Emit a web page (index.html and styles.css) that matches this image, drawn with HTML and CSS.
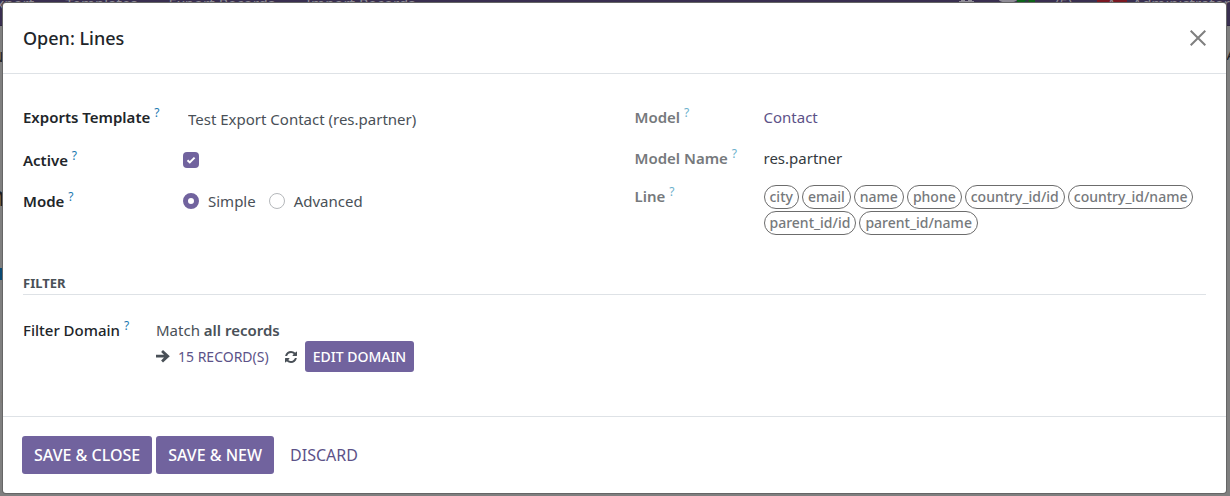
FILE: index.html
```html
<!DOCTYPE html>
<html lang="en">
<head>
<meta charset="utf-8">
<title>Open: Lines</title>
<link rel="stylesheet" href="styles.css">
</head>
<body>
<div class="backdrop" aria-hidden="true">
  <div class="topbar">
    <span class="menu menu-export">Export</span>
    <span class="menu">Templates</span>
    <span class="menu">Export Records</span>
    <span class="menu">Import Records</span>
    <span class="systray">
      <svg class="tray-icon" viewBox="0 0 16 16"><path d="M2 0h4v2H2zM9 0h4v2H9zM0 1h15v1H0z"/></svg>
      <svg class="tray-icon chat" viewBox="0 0 20 16"><ellipse cx="9" cy="-2" rx="10" ry="5"/></svg>
      <span class="count">4</span>
      <span class="count-text">(5)</span>
      <span class="avatar">A</span>
      <span class="user">Administrator</span>
    </span>
  </div>
  <span class="peek peek-n">N</span>
  <span class="peek peek-a">A</span>
  <span class="peek peek-m">n</span>
  <span class="peek peek-bar"></span>
  <span class="peek peek-i">i</span>
</div>
<main class="modal" role="dialog" aria-labelledby="title">
  <header class="modal-header">
    <h1 class="modal-title" id="title">Open: Lines</h1>
    <button class="close" type="button" aria-label="Close">
      <svg viewBox="0 0 16 16" width="16" height="16"><path d="M.7.7l14.6 14.6M15.3.7L.7 15.3" fill="none" stroke="#7f7f7f" stroke-width="2"/></svg>
    </button>
  </header>
  <form class="modal-body">
    <div class="groups">
      <div class="group">
        <div class="row row-template">
          <label class="label" for="template">Exports Template <sup>?</sup></label>
          <input class="text-input" id="template" type="text" value="Test Export Contact (res.partner)">
        </div>
        <div class="row row-active">
          <label class="label" for="active">Active <sup>?</sup></label>
          <input class="check" id="active" type="checkbox" checked>
        </div>
        <div class="row row-mode">
          <span class="label" id="mode">Mode <sup>?</sup></span>
          <div class="radios" role="radiogroup" aria-labelledby="mode">
            <label class="option"><input class="radio" type="radio" name="mode" checked>Simple</label>
            <label class="option"><input class="radio" type="radio" name="mode">Advanced</label>
          </div>
        </div>
      </div>
      <div class="group group-readonly">
        <div class="row row-model">
          <span class="label">Model <sup>?</sup></span>
          <a class="link" href="#">Contact</a>
        </div>
        <div class="row row-name">
          <span class="label">Model Name <sup>?</sup></span>
          <span class="value">res.partner</span>
        </div>
        <div class="row row-line">
          <span class="label">Line <sup>?</sup></span>
          <div class="tags">
            <span class="tag">city</span>
            <span class="tag">email</span>
            <span class="tag">name</span>
            <span class="tag">phone</span>
            <span class="tag">country_id/id</span>
            <span class="tag">country_id/name</span>
            <span class="tag">parent_id/id</span>
            <span class="tag">parent_id/name</span>
          </div>
        </div>
      </div>
    </div>
    <h2 class="section">Filter</h2>
    <div class="filter">
      <span class="label">Filter Domain <sup>?</sup></span>
      <div class="domain">
        <div>Match <strong>all records</strong></div>
        <div class="domain-actions">
          <button class="records" type="button">
            <svg class="arrow" viewBox="0 0 14 14" width="14" height="14"><path d="M0 4.800h8L5.100 2 7 0l6.800 6.200L7 12.500l-1.900-2L8 7.600H0z" fill="#495057"/></svg>
            <span>15 record(s)</span>
          </button>
          <button class="refresh" type="button" aria-label="Refresh">
            <svg viewBox="0 0 1536 1536" width="12" height="12"><path fill="#495057" d="M1511 928q0 5-1 7-64 268-268 434.500T764 1536q-146 0-282.500-55T238 1324l-129 129q-19 19-45 19t-45-19-19-45V960q0-26 19-45t45-19h448q26 0 45 19t19 45-19 45l-137 137q71 66 161 102t187 36q134 0 250-65t186-179q11-17 53-117 8-23 30-23h192q13 0 22.500 9.500t9.500 22.500zm25-800v448q0 26-19 45t-45 19h-448q-26 0-45-19t-19-45 19-45l138-138Q969 256 768 256q-134 0-250 65T332 500q-11 17-53 117-8 23-30 23H50q-13 0-22.500-9.500T18 608v-7q65-268 270-434.500T768 0q146 0 284 55.500T1297 212l130-129q19-19 45-19t45 19 19 45z"/></svg>
          </button>
          <button class="btn btn-small" type="button">Edit Domain</button>
        </div>
      </div>
    </div>
  </form>
  <footer class="modal-footer">
    <button class="btn" type="button">Save &amp; Close</button>
    <button class="btn" type="button">Save &amp; New</button>
    <button class="btn btn-link" type="button">Discard</button>
  </footer>
</main>
</body>
</html>
```
FILE: styles.css
```css
* { box-sizing: border-box; }
body {
  margin: 0;
  min-height: 100vh;
  padding: 3px 4px 3px 3px;
  display: flex;
  background: #7f7f7f;
  color: #495057;
  font: 15px/22px "Noto Sans", "Open Sans", sans-serif;
}
button, input { font: inherit; color: inherit; margin: 0; }
button { cursor: pointer; border: 0; background: none; padding: 0; }

.backdrop { position: absolute; inset: 0; overflow: hidden; }
.topbar {
  display: flex;
  gap: 31px;
  height: 26px;
  background: #392f50;
  border-bottom: 1px solid #2d2540;
  color: #8f8c96;
  line-height: 6px;
  white-space: nowrap;
}
.menu-export { margin-left: -12px; }
.systray { margin-left: auto; display: flex; gap: 12px; }
.tray-icon { width: 16px; height: 16px; fill: #8f8c96; }
.chat { margin-left: 12px; width: 20px; }
.count { width: 18px; height: 10px; margin-left: -14px; text-align: center; background: #0c6418; color: #392f50; }
.count-text { margin-left: 8px; }
.avatar { width: 30px; height: 14px; margin-left: 12px; text-align: center; background: #7a1822; }
.user { margin-left: -6px; }
.peek { position: absolute; color: #1c1f24; }
.peek-n { left: -8px; top: 45px; }
.peek-a { right: -6px; top: 43px; }
.peek-m { left: -12px; top: 184px; font-size: 28px; }
.peek-bar { left: 0; top: 268px; width: 2px; height: 12px; background: #0b4a73; }
.peek-i { left: 1px; top: 386px; color: #2b1038; }

.modal {
  position: relative;
  flex: 1;
  display: flex;
  flex-direction: column;
  background: #fff;
  border-radius: 3px;
  box-shadow: 0 0 0 1px #666;
}
.modal-header {
  display: flex;
  justify-content: space-between;
  align-items: center;
  height: 71px;
  padding: 0 20px;
  border-bottom: 1px solid #dee2e6;
}
.modal-title { margin: 0; font-size: 18px; font-weight: 500; color: #212529; }
.close { display: flex; }

.modal-body { flex: 1; padding: 32px 20px 0; }
.groups { display: grid; grid-template-columns: 1fr 1fr; column-gap: 40px; }
.row { display: grid; grid-template-columns: 160px 1fr; }
.group-readonly .row { grid-template-columns: 129px 1fr; }
.label { font-weight: 600; color: #212529; }
.group-readonly .label { color: #76797c; }
sup { color: #1a78b0; font-size: 12px; font-weight: 400; line-height: 0; vertical-align: 6px; }
.group-readonly sup { color: #6cb0cc; }
.row-template { height: 43px; }
.row-active { height: 41px; }
.text-input { border: 0; padding: 0 5px; height: 26px; outline: 0; background: none; }
.check, .radio { appearance: none; width: 16px; height: 16px; border: 1px solid #b5b8bb; }
.check {
  margin-top: 3px;
  border: 0;
  border-radius: 4px;
  background: #71639e url("data:image/svg+xml,%3Csvg xmlns='http://www.w3.org/2000/svg' viewBox='0 0 16 16'%3E%3Cpath d='M4.5 8.200l2.300 2.200 4.800-4.800' fill='none' stroke='white' stroke-width='2'/%3E%3C/svg%3E");
}
.radios { display: flex; gap: 13px; }
.option { display: flex; align-items: center; gap: 9px; }
.radio { border-radius: 50%; }
.radio:checked { border: 5px solid #71639e; }
.row-model { height: 41px; }
.row-name { height: 38px; }
.link { color: #5c5288; text-decoration: none; }
.value { color: #343a40; }
.tags { display: flex; flex-wrap: wrap; gap: 2px 3px; }
.tag {
  height: 24px;
  padding: 0 5px;
  border: 1px solid #6c6c6c;
  border-radius: 12px;
  color: #76797c;
  font-size: 14px;
  font-weight: 500;
  line-height: 22px;
}
.section {
  margin: 37px 0 24px;
  border-bottom: 1px solid #dee2e6;
  font-size: 13px;
  line-height: 22px;
  font-weight: 700;
  text-transform: uppercase;
}
.filter { display: grid; grid-template-columns: 133px 1fr; }
.filter .label { font-weight: 500; }
.domain strong { font-weight: 600; }
.domain-actions { display: flex; align-items: center; font-size: 14px; }
.records { display: flex; align-items: center; gap: 8px; color: #5c5288; font-weight: 400; text-transform: uppercase; }
.refresh { display: flex; margin: 0 8px 0 16px; }
.btn {
  height: 38px;
  padding: 0 12px;
  border-radius: 3px;
  background: #71639e;
  color: #fff;
  font-size: 16px;
  font-weight: 500;
  text-transform: uppercase;
}
.btn-small { height: 31px; padding: 0 8px; font-size: 14px; }
.btn-link { background: none; color: #5c5288; font-weight: 400; }
.modal-footer {
  display: flex;
  align-items: center;
  gap: 4px;
  height: 77px;
  padding: 0 19px;
  border-top: 1px solid #dee2e6;
}
```
